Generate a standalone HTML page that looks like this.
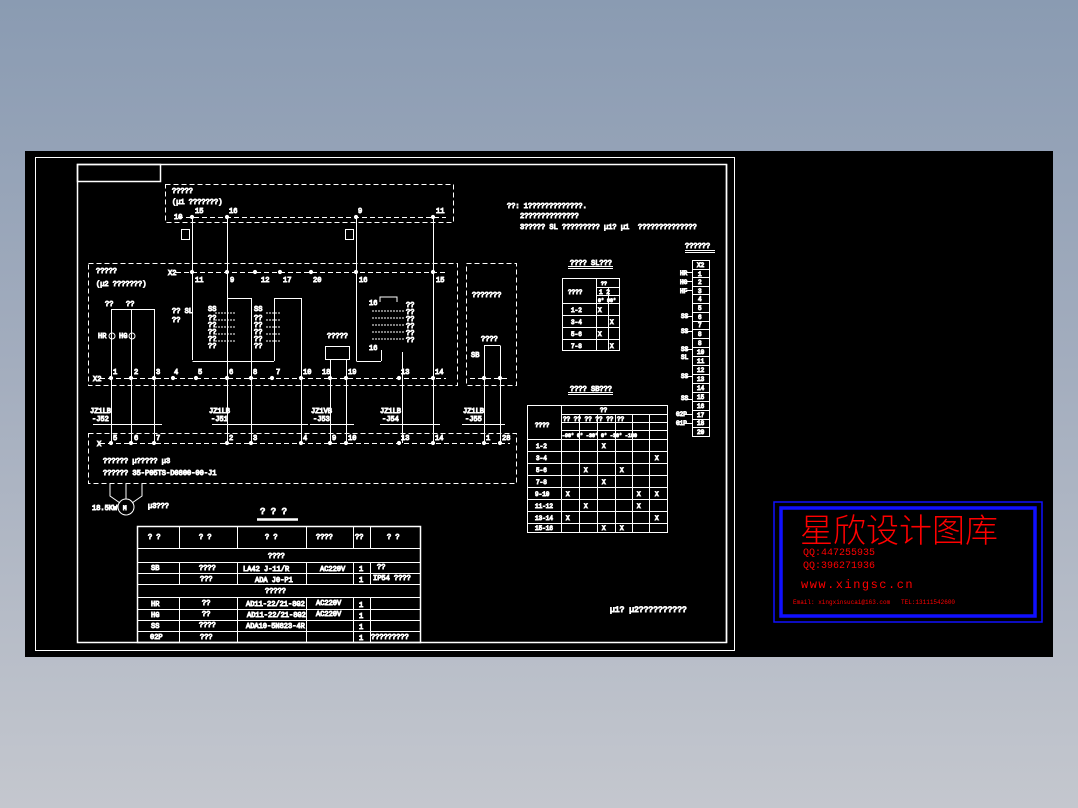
<!DOCTYPE html>
<html><head><meta charset="utf-8"><style>
html,body{margin:0;padding:0;}
body{width:1078px;height:808px;overflow:hidden;background:linear-gradient(#8a9bb2 0%,#a3adbe 45%,#c4c7ce 100%);position:relative;}
svg{position:absolute;left:0;top:0;}
text{font-family:"Liberation Mono",monospace;}
.wm{position:absolute;color:#ff0000;font-family:"Liberation Mono",monospace;white-space:nowrap;line-height:1;}
</style></head><body>
<svg width="1078" height="808" viewBox="0 0 1078 808" font-size="7">
<rect x="25" y="151" width="1028" height="506" fill="#000"/>
<g stroke="#fff" fill="none" stroke-width="1">
<rect x="35.5" y="157.5" width="699" height="493"/>
<rect x="77.5" y="164.5" width="649" height="478" stroke-width="1.5"/>
<rect x="77.5" y="164.5" width="83" height="17" stroke-width="1.5"/>
<line x1="734.5" y1="157" x2="734.5" y2="651"/>
<g stroke-dasharray="5,3">
<rect x="165.5" y="184.5" width="288" height="38"/>
<rect x="88.5" y="263.5" width="369" height="122"/>
<rect x="466.5" y="263.5" width="50" height="122"/>
<rect x="88.5" y="433.5" width="428" height="50"/>
<line x1="178" y1="217.5" x2="446" y2="217.5"/>
<line x1="176" y1="272.5" x2="446" y2="272.5"/>
<line x1="100" y1="378.5" x2="446" y2="378.5"/>
<line x1="470" y1="378.5" x2="510" y2="378.5"/>
<line x1="100" y1="443.5" x2="510" y2="443.5"/>
</g>
<g>
<line x1="192.5" y1="217" x2="192.5" y2="360"/>
<line x1="227.5" y1="217" x2="227.5" y2="443"/>
<line x1="356.5" y1="217" x2="356.5" y2="361"/>
<line x1="433.5" y1="217" x2="433.5" y2="443"/>
<line x1="192.5" y1="361.5" x2="274" y2="361.5"/>
<line x1="274.5" y1="298" x2="274.5" y2="361"/>
<line x1="227.5" y1="298.5" x2="251" y2="298.5"/>
<line x1="251.5" y1="298" x2="251.5" y2="443"/>
<line x1="274.5" y1="298.5" x2="301" y2="298.5"/>
<line x1="301.5" y1="298" x2="301.5" y2="443"/>
<line x1="356.5" y1="361.5" x2="381" y2="361.5"/>
<line x1="381.5" y1="350" x2="381.5" y2="361"/>
<line x1="402.5" y1="352" x2="402.5" y2="443"/>
<line x1="111.5" y1="309.5" x2="154" y2="309.5"/>
<line x1="111.5" y1="309" x2="111.5" y2="443"/>
<line x1="131.5" y1="309" x2="131.5" y2="443"/>
<line x1="154.5" y1="309" x2="154.5" y2="443"/>
<rect x="325.5" y="346.5" width="24" height="13"/>
<line x1="330.5" y1="360" x2="330.5" y2="443"/>
<line x1="346.5" y1="360" x2="346.5" y2="443"/>
<line x1="484.5" y1="345" x2="484.5" y2="443"/>
<line x1="500.5" y1="345.5" x2="500.5" y2="443"/>
<line x1="484.5" y1="345.5" x2="500" y2="345.5"/>
<line x1="93" y1="424.5" x2="162" y2="424.5"/>
<line x1="212" y1="424.5" x2="308" y2="424.5"/>
<line x1="310" y1="424.5" x2="354" y2="424.5"/>
<line x1="380" y1="424.5" x2="440" y2="424.5"/>
<line x1="462" y1="424.5" x2="505" y2="424.5"/>
<rect x="181.5" y="229.5" width="8" height="10"/>
<rect x="345.5" y="229.5" width="8" height="10"/>
<path d="M110 484 L110 496 L120 503 M126 484 L126 499 M142 484 L142 496 L132 503"/>
<circle cx="126" cy="507" r="8"/>
<circle cx="112" cy="336" r="3"/><circle cx="132" cy="336" r="3"/>
<g stroke-dasharray="2,1"><line x1="215" y1="313" x2="235" y2="313"/><line x1="215" y1="320" x2="235" y2="320"/><line x1="215" y1="327" x2="235" y2="327"/><line x1="215" y1="334" x2="235" y2="334"/><line x1="215" y1="341" x2="235" y2="341"/>
<line x1="266" y1="313" x2="281" y2="313"/><line x1="266" y1="320" x2="281" y2="320"/><line x1="266" y1="327" x2="281" y2="327"/><line x1="266" y1="334" x2="281" y2="334"/><line x1="266" y1="341" x2="281" y2="341"/>
<line x1="372" y1="311" x2="405" y2="311"/><line x1="372" y1="318" x2="405" y2="318"/><line x1="372" y1="325" x2="405" y2="325"/><line x1="372" y1="332" x2="405" y2="332"/><line x1="372" y1="339" x2="405" y2="339"/></g>
<path d="M380 302 L380 297 L397 297 L397 302"/>
<line x1="257" y1="519.5" x2="298" y2="519.5" stroke-width="2.5"/>
</g>
<g fill="#fff">
<circle cx="192" cy="217" r="1.6"/><circle cx="227" cy="217" r="1.6"/><circle cx="356" cy="217" r="1.6"/><circle cx="433" cy="217" r="1.6"/>
<circle cx="192" cy="272" r="1.6"/><circle cx="227" cy="272" r="1.6"/><circle cx="255" cy="272" r="1.6"/><circle cx="280" cy="272" r="1.6"/><circle cx="311" cy="272" r="1.6"/><circle cx="356" cy="272" r="1.6"/><circle cx="433" cy="272" r="1.6"/>
<circle cx="111" cy="378" r="1.6"/><circle cx="131" cy="378" r="1.6"/><circle cx="154" cy="378" r="1.6"/><circle cx="173" cy="378" r="1.6"/><circle cx="196" cy="378" r="1.6"/><circle cx="227" cy="378" r="1.6"/><circle cx="251" cy="378" r="1.6"/><circle cx="272" cy="378" r="1.6"/><circle cx="301" cy="378" r="1.6"/><circle cx="330" cy="378" r="1.6"/><circle cx="346" cy="378" r="1.6"/><circle cx="399" cy="378" r="1.6"/><circle cx="433" cy="378" r="1.6"/><circle cx="484" cy="378" r="1.6"/><circle cx="500" cy="378" r="1.6"/>
<circle cx="111" cy="443" r="1.6"/><circle cx="131" cy="443" r="1.6"/><circle cx="154" cy="443" r="1.6"/><circle cx="227" cy="443" r="1.6"/><circle cx="251" cy="443" r="1.6"/><circle cx="301" cy="443" r="1.6"/><circle cx="330" cy="443" r="1.6"/><circle cx="346" cy="443" r="1.6"/><circle cx="399" cy="443" r="1.6"/><circle cx="433" cy="443" r="1.6"/><circle cx="484" cy="443" r="1.6"/><circle cx="500" cy="443" r="1.6"/>
</g>
<g fill="#fff">
<text x="172" y="193">?????</text><text x="172" y="204">(µ1 ???????)</text>
<text x="174" y="219">10</text><text x="195" y="213">15</text><text x="229" y="213">16</text><text x="358" y="213">9</text><text x="436" y="213">11</text>
<text x="96" y="273">?????</text><text x="96" y="286">(µ2 ???????)</text>
<text x="168" y="275">X2</text><text x="195" y="282">11</text><text x="230" y="282">9</text><text x="261" y="282">12</text><text x="283" y="282">17</text><text x="313" y="282">20</text><text x="359" y="282">16</text><text x="436" y="282">15</text>
<text x="105" y="306">??</text><text x="126" y="306">??</text>
<text x="98" y="338">HR</text><text x="119" y="338">HG</text>
<text x="172" y="313">?? SL</text><text x="172" y="322">??</text>
<text x="208" y="311">SS</text><text x="208" y="320">??</text><text x="208" y="327">??</text><text x="208" y="334">??</text><text x="208" y="341">??</text><text x="208" y="348">??</text>
<text x="254" y="311">SS</text><text x="254" y="320">??</text><text x="254" y="327">??</text><text x="254" y="334">??</text><text x="254" y="341">??</text><text x="254" y="348">??</text>
<text x="327" y="338">?????</text>
<text x="369" y="305">16</text><text x="406" y="307">??</text><text x="406" y="314">??</text><text x="406" y="321">??</text><text x="406" y="328">??</text><text x="406" y="335">??</text><text x="406" y="342">??</text><text x="369" y="350">16</text>
<text x="472" y="297">???????</text><text x="481" y="341">????</text><text x="471" y="357">SB</text>
<text x="93" y="381">X2</text><text x="113" y="374">1</text><text x="134" y="374">2</text><text x="156" y="374">3</text><text x="174" y="374">4</text><text x="198" y="374">5</text><text x="229" y="374">6</text><text x="253" y="374">8</text><text x="276" y="374">7</text><text x="303" y="374">10</text><text x="322" y="374">18</text><text x="348" y="374">19</text><text x="401" y="374">13</text><text x="435" y="374">14</text>
<text x="90" y="413">JZ1LB</text><text x="92" y="421">-J52</text><text x="209" y="413">JZ1LB</text><text x="211" y="421">-J51</text><text x="311" y="413">JZ1VB</text><text x="313" y="421">-J53</text><text x="380" y="413">JZ1LB</text><text x="382" y="421">-J54</text><text x="463" y="413">JZ1LB</text><text x="465" y="421">-J55</text>
<text x="97" y="446">X</text><text x="113" y="440">5</text><text x="134" y="440">6</text><text x="156" y="440">7</text><text x="229" y="440">2</text><text x="253" y="440">3</text><text x="303" y="440">4</text><text x="332" y="440">9</text><text x="348" y="440">10</text><text x="401" y="440">13</text><text x="435" y="440">14</text><text x="486" y="440">1</text><text x="502" y="440">28</text>
<text x="103" y="463">?????? µ????? µ3</text><text x="103" y="475">?????? 35-P05TS-D0800-00-J1</text>
<text x="92" y="510">18.5KW</text><text x="123" y="510" font-size="6">M</text><text x="148" y="508">µ3???</text>
<text x="260" y="514" font-size="9">? ? ?</text>
</g>
<g stroke="#fff" fill="none">
<rect x="137.5" y="526.5" width="283" height="116" stroke-width="1.5"/>
<line x1="137" y1="548.5" x2="420" y2="548.5"/><line x1="137" y1="562.5" x2="420" y2="562.5"/><line x1="137" y1="573.5" x2="420" y2="573.5"/><line x1="137" y1="584.5" x2="420" y2="584.5"/><line x1="137" y1="597.5" x2="420" y2="597.5"/><line x1="137" y1="609.5" x2="420" y2="609.5"/><line x1="137" y1="620.5" x2="420" y2="620.5"/><line x1="137" y1="631.5" x2="420" y2="631.5"/>
<path d="M179.5 526V548 M237.5 526V548 M306.5 526V548 M353.5 526V548 M370.5 526V548 M179.5 562V584 M237.5 562V584 M306.5 562V584 M353.5 562V584 M370.5 562V584 M179.5 597V642 M237.5 597V642 M306.5 597V642 M353.5 597V642 M370.5 597V642"/>
</g>
<g fill="#fff">
<text x="148" y="539">? ?</text><text x="199" y="539">? ?</text><text x="265" y="539">? ?</text><text x="316" y="539">????</text><text x="355" y="539">??</text><text x="387" y="539">? ?</text>
<text x="268" y="558">????</text><text x="151" y="570">SB</text><text x="199" y="570">????</text><text x="243" y="571">LA42 J-11/R</text><text x="320" y="571">AC220V</text><text x="359" y="571">1</text><text x="377" y="569">??</text>
<text x="200" y="581">???</text><text x="255" y="582">ADA J0-P1</text><text x="359" y="582">1</text><text x="373" y="580">IP54 ????</text>
<text x="265" y="593">?????</text>
<text x="151" y="606">HR</text><text x="202" y="605">??</text><text x="246" y="606">AD11-22/21-8G2</text><text x="316" y="605">AC220V</text><text x="359" y="607">1</text>
<text x="151" y="617">HG</text><text x="202" y="616">??</text><text x="247" y="617">AD11-22/21-8G2</text><text x="316" y="616">AC220V</text><text x="359" y="618">1</text>
<text x="151" y="628">SS</text><text x="199" y="627">????</text><text x="246" y="628">ADA10-5N823-4R</text><text x="359" y="629">1</text>
<text x="150" y="639">02P</text><text x="200" y="639">???</text><text x="359" y="640">1</text><text x="371" y="639">?????????</text>
</g>
<g fill="#fff">
<text x="507" y="208">??: 1?????????????.</text><text x="520" y="218">2?????????????</text><text x="520" y="229">3????? SL ????????? µ1? µ1</text><text x="638" y="229">??????????????</text>
<text x="570" y="265">???? SL???</text><text x="570" y="391">???? SB???</text><text x="685" y="248">??????</text>
<text x="610" y="612" font-size="8">µ1? µ2??????????</text>
</g>
<g stroke="#fff" fill="none">
<line x1="568" y1="266.5" x2="613" y2="266.5"/><line x1="568" y1="268.5" x2="613" y2="268.5"/>
<line x1="568" y1="392.5" x2="613" y2="392.5"/><line x1="568" y1="394.5" x2="613" y2="394.5"/>
<line x1="685" y1="250.5" x2="715" y2="250.5"/><line x1="685" y1="252.5" x2="715" y2="252.5"/>
<rect x="562.5" y="278.5" width="57" height="72"/>
<path d="M562 303.5H619 M562 315.5H619 M562 327.5H619 M562 339.5H619 M596.5 278V351 M608.5 287V351 M596 287.5H619 M596 295.5H619"/>
<rect x="527.5" y="405.5" width="140" height="127"/>
<path d="M561.5 405V532 M579.5 414V532 M597.5 414V532 M615.5 414V532 M632.5 414V532 M649.5 414V532 M561 414.5H667 M561 422.5H667 M561 430.5H667 M527 439.5H667 M527 451.5H667 M527 463.5H667 M527 475.5H667 M527 487.5H667 M527 499.5H667 M527 511.5H667 M527 523.5H667"/>
<rect x="692.5" y="260.5" width="17" height="176"/>
<path d="M692 269.5H709 M692 277.5H709 M692 286.5H709 M692 294.5H709 M692 303.5H709 M692 312.5H709 M692 321.5H709 M692 329.5H709 M692 338.5H709 M692 347.5H709 M692 356.5H709 M692 365.5H709 M692 374.5H709 M692 383.5H709 M692 392.5H709 M692 401.5H709 M692 410.5H709 M692 419.5H709 M692 427.5H709"/>
<path d="M686 272.5H692 M686 281.5H692 M686 290.5H692 M686 316.5H692 M686 331.5H692 M686 349.5H692 M686 376.5H692 M686 399.5H692 M686 414.5H692 M686 423.5H692"/>
<line x1="726.5" y1="164" x2="726.5" y2="643" stroke-width="1.5"/>
</g>
<g font-size="6" fill="#fff">
<text x="568" y="294">????</text><text x="601" y="285" font-size="5">??</text><text x="599" y="294">1 2</text><text x="598" y="302" font-size="5">0° 90°</text>
<text x="571" y="312">1-2</text><text x="598" y="312">X</text><text x="571" y="324">3-4</text><text x="610" y="324">X</text><text x="571" y="336">5-6</text><text x="598" y="336">X</text><text x="571" y="348">7-8</text><text x="610" y="348">X</text>
<text x="535" y="427">????</text><text x="600" y="412">??</text>
<text x="563" y="421">?? ?? ?? ?? ?? ??</text><text x="562" y="437" font-size="5">-90° 0° -30° 0° -30° -180</text>
<text x="536" y="448">1-2</text><text x="536" y="460">3-4</text><text x="536" y="472">5-6</text><text x="536" y="484">7-8</text><text x="535" y="496">9-10</text><text x="535" y="508">11-12</text><text x="535" y="520">13-14</text><text x="535" y="530">15-16</text>
<text x="602" y="448">X</text><text x="655" y="460">X</text><text x="584" y="472">X</text><text x="620" y="472">X</text><text x="602" y="484">X</text><text x="566" y="496">X</text><text x="637" y="496">X</text><text x="655" y="496">X</text><text x="584" y="508">X</text><text x="637" y="508">X</text><text x="566" y="520">X</text><text x="655" y="520">X</text><text x="602" y="530">X</text><text x="620" y="530">X</text>
<text x="697" y="267">X2</text><text x="698" y="276">1</text><text x="698" y="284">2</text><text x="698" y="293">3</text><text x="698" y="301">4</text><text x="698" y="310">5</text><text x="698" y="319">6</text><text x="698" y="327">7</text><text x="698" y="336">8</text><text x="698" y="345">8</text><text x="697" y="354">10</text><text x="697" y="363">11</text><text x="697" y="372">12</text><text x="697" y="381">13</text><text x="697" y="390">14</text><text x="697" y="399">15</text><text x="697" y="408">16</text><text x="697" y="417">17</text><text x="697" y="425">18</text><text x="697" y="434">20</text>
<text x="680" y="275">HR</text><text x="680" y="284">HG</text><text x="680" y="293">HF</text><text x="681" y="318">SS</text><text x="681" y="333">SS</text><text x="681" y="351">SS</text><text x="681" y="359">SL</text><text x="681" y="378">SS</text><text x="681" y="400">SS</text><text x="676" y="416">G2P</text><text x="676" y="425">G1P</text>
</g>
<rect x="774" y="502" width="268" height="120" fill="none" stroke="#1010ff" stroke-width="1.5"/>
<rect x="781" y="508" width="254" height="108" fill="none" stroke="#1010ff" stroke-width="3.5"/>
</svg>
<div class="wm" style="left:800px;top:512px;font-family:'Noto Sans CJK SC',sans-serif;font-size:33px;font-weight:300;">星欣设计图库</div>
<div class="wm" style="left:803px;top:549px;font-size:10px;">QQ:447255935</div>
<div class="wm" style="left:803px;top:562px;font-size:10px;">QQ:396271936</div>
<div class="wm" style="left:801px;top:579px;font-size:12px;letter-spacing:1.5px;">www.xingsc.cn</div>
<div class="wm" style="left:793px;top:600px;font-size:6px;">Email: xingxinsucai@163.com &nbsp; TEL:13111542600</div>
</body></html>
